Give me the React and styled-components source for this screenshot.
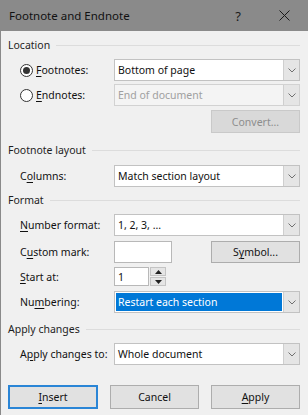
import React from "react";
import styled, { createGlobalStyle } from "styled-components";

const Global = createGlobalStyle`
  html, body { margin: 0; padding: 0; background: #ffffff; }
  body { font-family: "Noto Sans", "Open Sans", sans-serif; color: #000; }
  * { box-sizing: border-box; }
`;

const Dialog = styled.div`
  width: 308px;
  height: 415px;
  display: flex;
  flex-direction: column;
  overflow: hidden;
`;

const TitleBar = styled.div`
  height: 31px;
  flex: none;
  background: #8a8a8a;
  display: flex;
  align-items: center;
  padding-left: 9px;
  padding-right: 1px;
  color: #111;
  font-size: 11.5px;
`;

const Title = styled.div`
  flex: 1;
  white-space: nowrap;
`;

const TitleButton = styled.div`
  width: 46px;
  height: 31px;
  display: flex;
  align-items: center;
  justify-content: center;
  font-size: 13px;
  color: #1a1a1a;
`;

const Body = styled.div`
  flex: 1;
  background: #f0f0f0;
  border-left: 1px solid #8a8a8a;
  padding: 6px 8px 0 7px;
  display: flex;
  flex-direction: column;
  font-size: 10.5px;
`;

const Heading = styled.div`
  display: flex;
  align-items: center;
  gap: 6px;
  height: 16px;
  margin-top: ${(p) => p.$mt || 0}px;
  color: #1e1e1e;
  white-space: nowrap;
  &::after {
    content: "";
    flex: 1;
    height: 1px;
    background: #dcdcdc;
  }
`;

const Row = styled.div`
  display: grid;
  grid-template-columns: 94px 1fr;
  align-items: center;
  padding-left: 12px;
  margin-top: ${(p) => p.$mt || 0}px;
`;

const Label = styled.div`
  display: flex;
  align-items: center;
  gap: 3px;
  white-space: nowrap;
  color: #111;
`;

const Mn = styled.span`
  text-decoration: underline;
  text-underline-offset: 2px;
`;

const Radio = styled.span`
  width: 13px;
  height: 13px;
  border-radius: 50%;
  border: 1px solid #333;
  background: #fff;
  display: inline-flex;
  align-items: center;
  justify-content: center;
  flex: none;
  &::after {
    content: "";
    width: 7px;
    height: 7px;
    border-radius: 50%;
    background: ${(p) => (p.$checked ? "#333" : "transparent")};
  }
`;

const Select = styled.div`
  height: 22px;
  display: flex;
  border: 1px solid ${(p) => (p.$disabled ? "#d2d2d2" : "#c2c2c2")};
  background: ${(p) => (p.$disabled ? "#f4f4f4" : "#fff")};
`;

const SelectValue = styled.div`
  flex: 1;
  display: flex;
  align-items: center;
  padding: 0 3px;
  color: ${(p) => (p.$disabled ? "#a0a0a0" : "#111")};
  white-space: nowrap;
`;

const Highlight = styled.div`
  flex: 1;
  height: 18px;
  margin: 1px;
  background: #0078d7;
  color: #fff;
  display: flex;
  align-items: center;
  padding: 0 2px;
  white-space: nowrap;
`;

const SelectArrow = styled.div`
  width: 16px;
  flex: none;
  background: #e5e5e5;
  border-left: 1px solid #cfcfcf;
  display: flex;
  align-items: center;
  justify-content: center;
`;

const Button = styled.button`
  height: ${(p) => p.$h || 23}px;
  width: ${(p) => (p.$w ? p.$w + "px" : "auto")};
  font-family: inherit;
  font-size: 10.5px;
  padding: 0;
  background: ${(p) => (p.$disabled ? "#d9d9d9" : "#e1e1e1")};
  color: ${(p) => (p.$disabled ? "#8d8d8d" : "#111")};
  border: ${(p) => (p.$primary ? "2px solid #2a85d6" : p.$disabled ? "1px solid #c9c9c9" : "1px solid #adadad")};
  display: flex;
  align-items: center;
  justify-content: center;
`;

const RightRow = styled.div`
  display: flex;
  justify-content: flex-end;
  margin-top: ${(p) => p.$mt || 0}px;
`;

const Control = styled.div`
  display: flex;
  align-items: center;
`;

const TextBox = styled.div`
  width: ${(p) => p.$w}px;
  height: ${(p) => p.$h}px;
  background: #fff;
  border: 1px solid #b8b8b8;
  display: flex;
  align-items: center;
  padding-left: 3px;
  color: #111;
`;

const Spinner = styled.div`
  width: 16px;
  height: 19px;
  margin-left: 1px;
  display: flex;
  flex-direction: column;
  gap: 1px;
`;

const SpinButton = styled.div`
  flex: 1;
  background: #e5e5e5;
  border: 1px solid #c4c4c4;
  display: flex;
  align-items: center;
  justify-content: center;
`;

const Footer = styled.div`
  display: grid;
  grid-template-columns: 90px 89px 89px;
  justify-content: space-between;
  margin-top: 20px;
`;

const Chevron = () => (
  <svg width="8" height="5" viewBox="0 0 8 5">
    <path d="M0.5 0.5 L4 4 L7.5 0.5" fill="none" stroke="#707070" strokeWidth="1" />
  </svg>
);

const Tri = ({ up }) => (
  <svg width="7" height="4" viewBox="0 0 7 4">
    <path d={up ? "M0 4 L3.5 0 L7 4 Z" : "M0 0 L3.5 4 L7 0 Z"} fill="#222" />
  </svg>
);

const CloseIcon = () => (
  <svg width="11" height="11" viewBox="0 0 11 11">
    <path d="M0.5 0.5 L10.5 10.5 M10.5 0.5 L0.5 10.5" stroke="#1a1a1a" strokeWidth="1" />
  </svg>
);

function Combo({ value, disabled, selected }) {
  return (
    <Select $disabled={disabled}>
      {selected ? (
        <Highlight>{value}</Highlight>
      ) : (
        <SelectValue $disabled={disabled}>{value}</SelectValue>
      )}
      <SelectArrow>
        <Chevron />
      </SelectArrow>
    </Select>
  );
}

export default function App() {
  return (
    <>
      <Global />
      <Dialog>
        <TitleBar>
          <Title>Footnote and Endnote</Title>
          <TitleButton>?</TitleButton>
          <TitleButton>
            <CloseIcon />
          </TitleButton>
        </TitleBar>
        <Body>
          <Heading>Location</Heading>
          <Row $mt={6}>
            <Label>
              <Radio $checked />
              <span>
                <Mn>F</Mn>ootnotes:
              </span>
            </Label>
            <Combo value="Bottom of page" />
          </Row>
          <Row $mt={3}>
            <Label>
              <Radio />
              <span>
                <Mn>E</Mn>ndnotes:
              </span>
            </Label>
            <Combo value="End of document" disabled />
          </Row>
          <RightRow $mt={4}>
            <Button $w={89} $disabled>
              Convert...
            </Button>
          </RightRow>

          <Heading $mt={9}>Footnote layout</Heading>
          <Row $mt={7}>
            <Label>
              <span>
                C<Mn>o</Mn>lumns:
              </span>
            </Label>
            <Combo value="Match section layout" />
          </Row>

          <Heading $mt={5}>Format</Heading>
          <Row $mt={6}>
            <Label>
              <span>
                <Mn>N</Mn>umber format:
              </span>
            </Label>
            <Combo value="1, 2, 3, ..." />
          </Row>
          <Row $mt={5}>
            <Label>
              <span>
                C<Mn>u</Mn>stom mark:
              </span>
            </Label>
            <Control>
              <TextBox $w={58} $h={22} />
              <Button $w={89} $h={22} style={{ marginLeft: "auto" }}>
                <span>
                  S<Mn>y</Mn>mbol...
                </span>
              </Button>
            </Control>
          </Row>
          <Row $mt={4}>
            <Label>
              <span>
                <Mn>S</Mn>tart at:
              </span>
            </Label>
            <Control>
              <TextBox $w={35} $h={19}>1</TextBox>
              <Spinner>
                <SpinButton>
                  <Tri up />
                </SpinButton>
                <SpinButton>
                  <Tri />
                </SpinButton>
              </Spinner>
            </Control>
          </Row>
          <Row $mt={5}>
            <Label>
              <span>
                Nu<Mn>m</Mn>bering:
              </span>
            </Label>
            <Combo value="Restart each section" selected />
          </Row>

          <Heading $mt={8}>Apply changes</Heading>
          <Row $mt={6}>
            <Label>
              <span>
                A<Mn>p</Mn>ply changes to:
              </span>
            </Label>
            <Combo value="Whole document" />
          </Row>

          <Footer>
            <Button $h={24} $primary>
              <span>
                <Mn>I</Mn>nsert
              </span>
            </Button>
            <Button $h={24}>Cancel</Button>
            <Button $h={24}>
              <span>
                <Mn>A</Mn>pply
              </span>
            </Button>
          </Footer>
        </Body>
      </Dialog>
    </>
  );
}
